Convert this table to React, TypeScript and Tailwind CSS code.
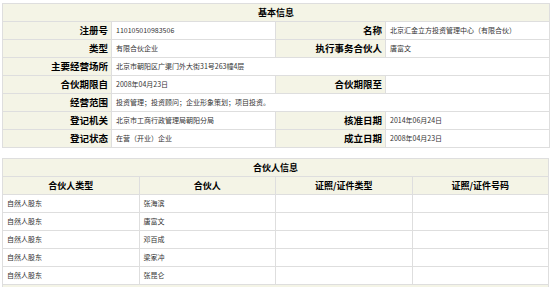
import React from "react";

const font = { fontFamily: "'Noto Sans CJK SC', 'Noto Sans', sans-serif" };

const basic: [string, string, string?, string?][] = [
  ["注册号", "110105010983506", "名称", "北京汇金立方投资管理中心（有限合伙）"],
  ["类型", "有限合伙企业", "执行事务合伙人", "唐富文"],
  ["主要经营场所", "北京市朝阳区广渠门外大街31号263幢4层"],
  ["合伙期限自", "2008年04月23日", "合伙期限至", ""],
  ["经营范围", "投资管理；投资顾问；企业形象策划；项目投资。"],
  ["登记机关", "北京市工商行政管理局朝阳分局", "核准日期", "2014年06月24日"],
  ["登记状态", "在营（开业）企业", "成立日期", "2008年04月23日"],
];

const partners = ["张海滨", "唐富文", "邓百成", "梁家冲", "张昆仑"];

const th = "h-[18px] p-0 border border-[#dedede] bg-[#f4f4e6] text-[9px] font-bold text-black leading-none";
const label = "h-[18px] p-0 pr-[3px] border border-[#dedede] bg-[#f4f4e6] text-right text-[9.5px] font-bold text-black leading-none whitespace-nowrap";
const value = "h-[18px] p-0 pl-[4px] border border-[#dedede] bg-white text-left text-[7px] text-[#333] leading-none whitespace-nowrap";

export default function App() {
  return (
    <div className="w-[550px] h-[287px] overflow-hidden bg-white px-[2px] pt-[3px]" style={font}>
      <table className="w-[547px] border-collapse table-fixed">
        <colgroup>
          <col className="w-[109px]" />
          <col className="w-[164px]" />
          <col className="w-[110px]" />
          <col className="w-[164px]" />
        </colgroup>
        <tbody>
          <tr>
            <th colSpan={4} className={th}>基本信息</th>
          </tr>
          {basic.map((r, i) => (
            <tr key={i}>
              <td className={label}>{r[0]}</td>
              {r[2] === undefined ? (
                <td colSpan={3} className={value}>{r[1]}</td>
              ) : (
                <>
                  <td className={value}>{r[1]}</td>
                  <td className={label}>{r[2]}</td>
                  <td className={value}>{r[3]}</td>
                </>
              )}
            </tr>
          ))}
        </tbody>
      </table>

      <table className="mt-[10px] w-[547px] border-collapse table-fixed">
        <tbody>
          <tr>
            <th colSpan={4} className={th}>合伙人信息</th>
          </tr>
          <tr>
            <th className={th}>合伙人类型</th>
            <th className={th}>合伙人</th>
            <th className={th}>证照/证件类型</th>
            <th className={th}>证照/证件号码</th>
          </tr>
          {partners.map((p) => (
            <tr key={p}>
              <td className={value}>自然人股东</td>
              <td className={value}>{p}</td>
              <td className={value}></td>
              <td className={value}></td>
            </tr>
          ))}
          <tr>
            <td colSpan={4} className={th}></td>
          </tr>
        </tbody>
      </table>
    </div>
  );
}
